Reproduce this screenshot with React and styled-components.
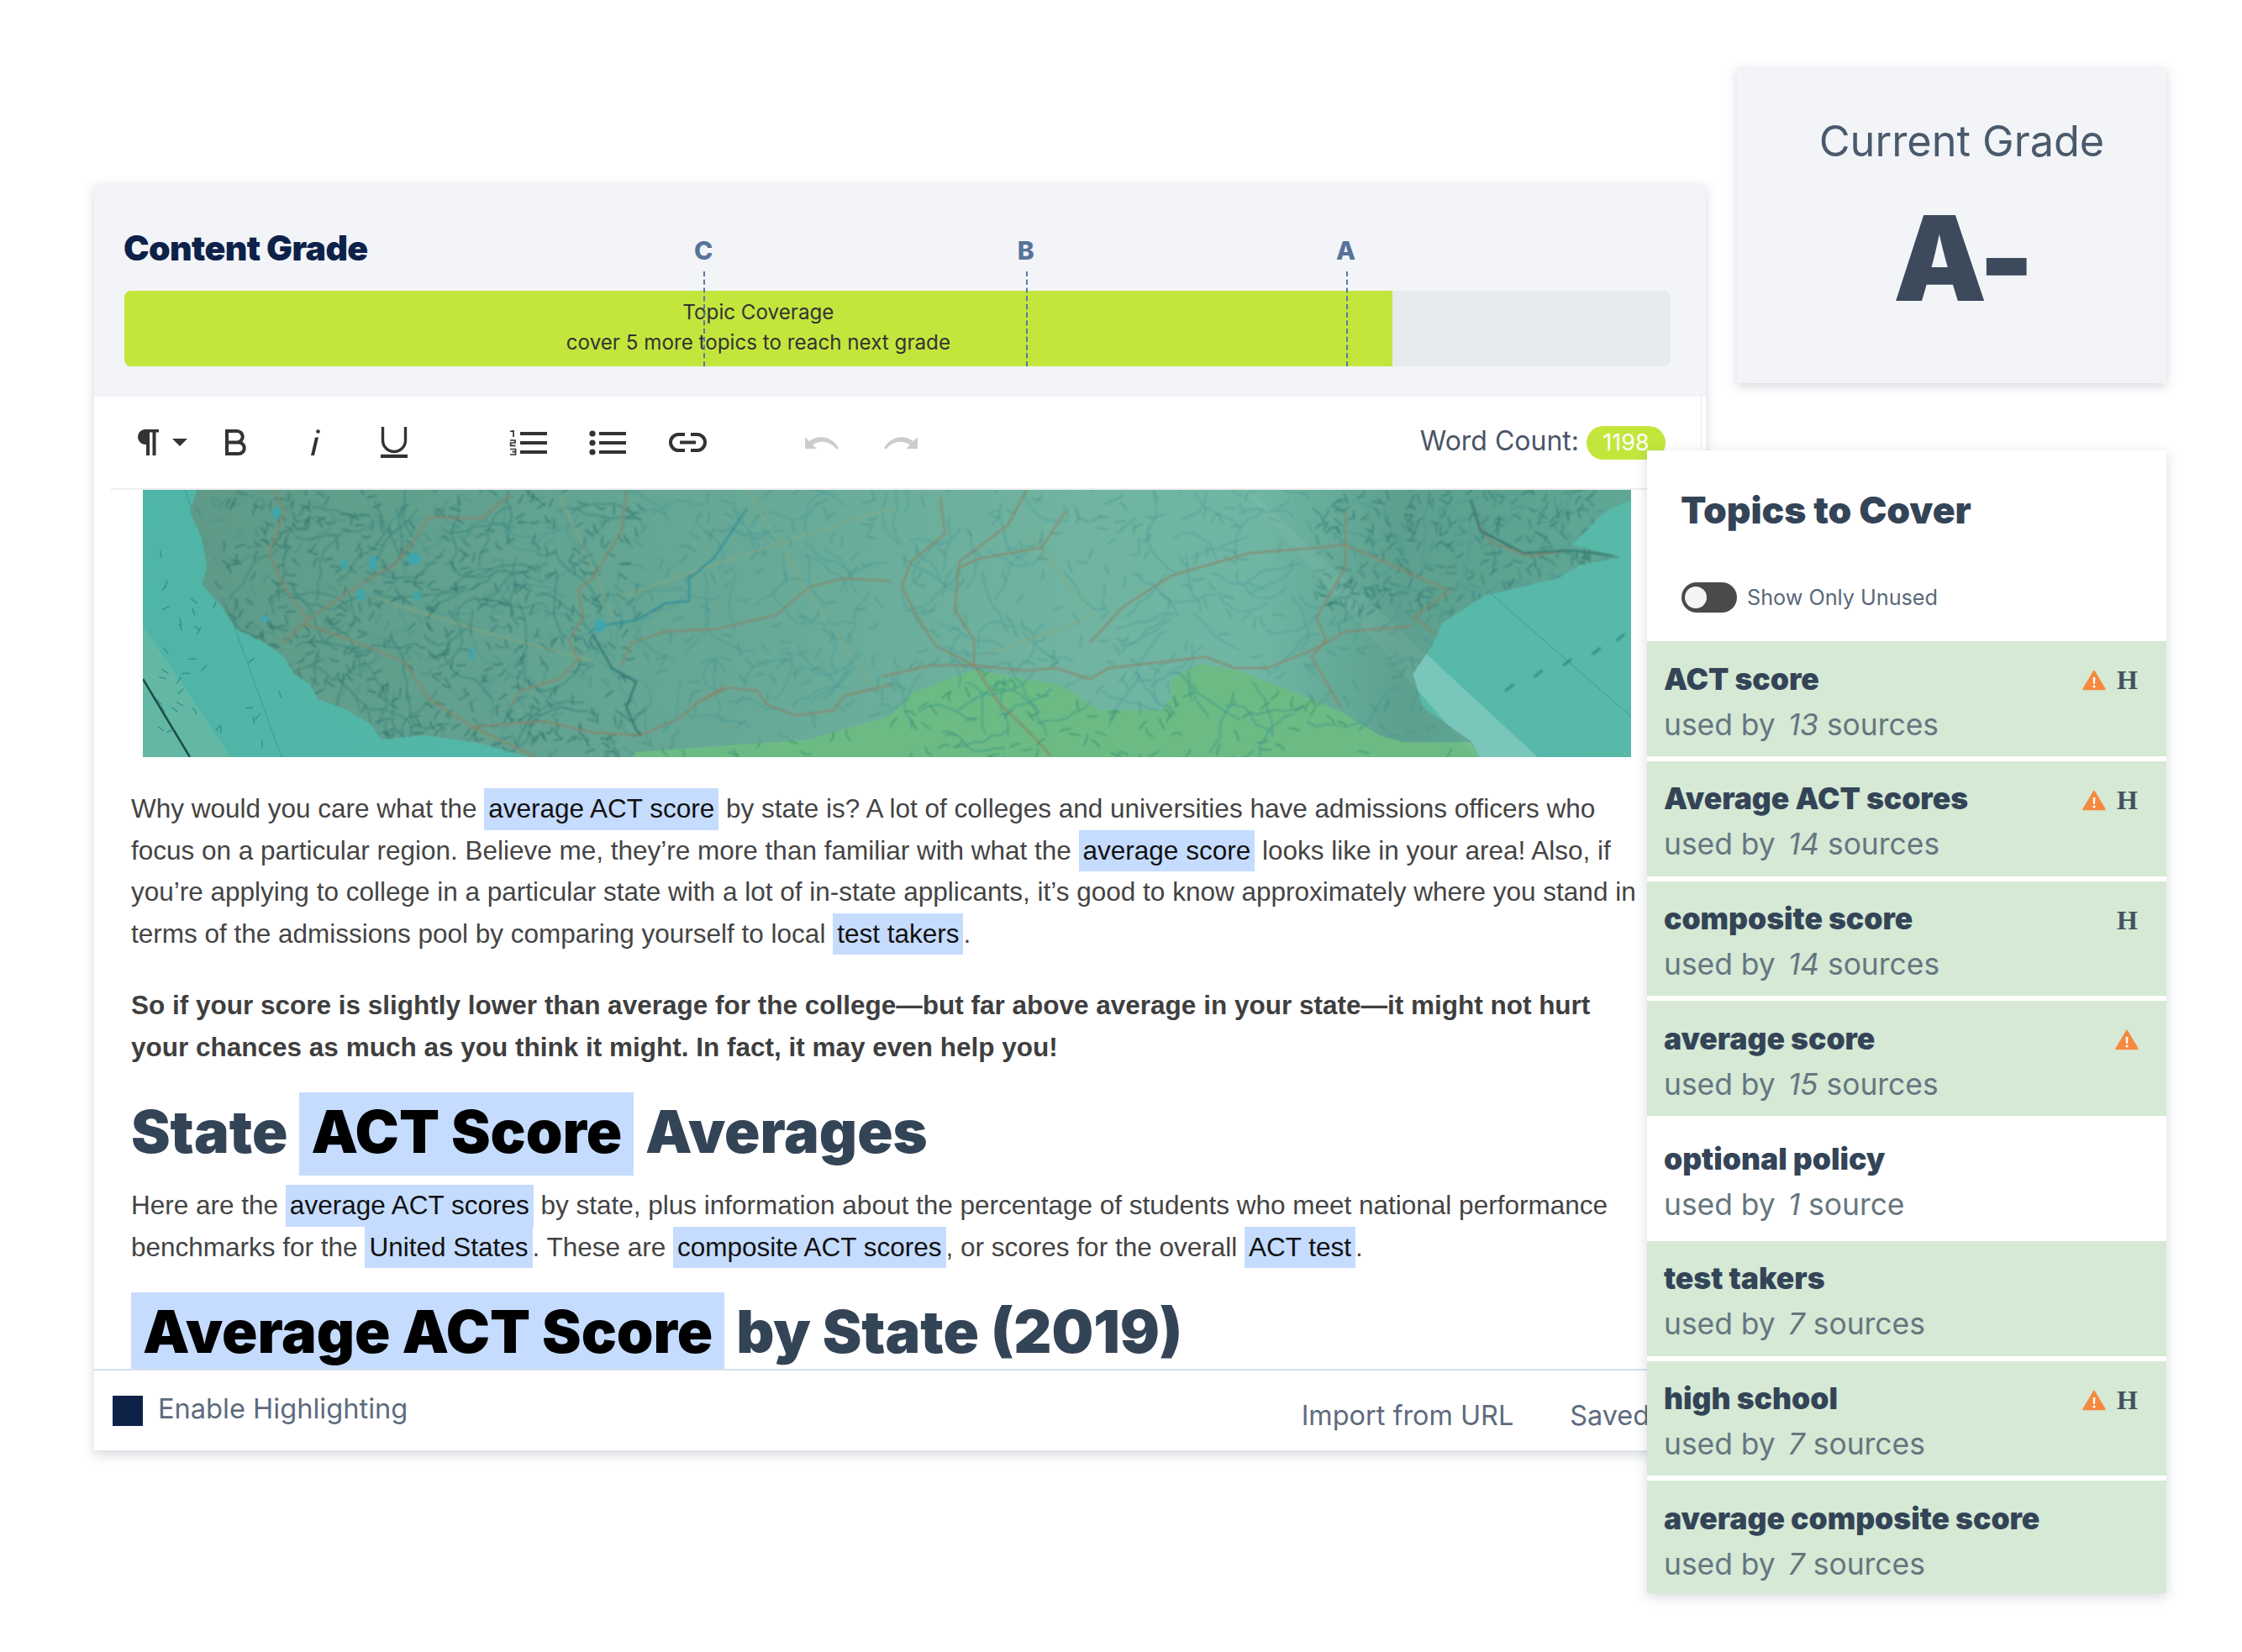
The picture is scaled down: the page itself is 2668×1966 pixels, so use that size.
import React from "react";
import styled, { createGlobalStyle } from "styled-components";

const topics = [
  { name: "ACT score", count: 13, warn: true, head: true, used: true },
  { name: "Average ACT scores", count: 14, warn: true, head: true, used: true },
  { name: "composite score", count: 14, head: true, used: true },
  { name: "average score", count: 15, warn: true, used: true },
  { name: "optional policy", count: 1 },
  { name: "test takers", count: 7, used: true },
  { name: "high school", count: 7, warn: true, head: true, used: true },
  { name: "average composite score", count: 7, used: true },
];

const grades = [
  { letter: "C", at: 37.45 },
  { letter: "B", at: 58.3 },
  { letter: "A", at: 79.0 },
];

function App() {
  return (
    <Page>
      <GlobalStyle />
      <Editor>
        <GradeHeader>
          <HeaderTitle>Content Grade</HeaderTitle>
          <Progress>
            <ProgressFill>
              <span>Topic Coverage</span>
              <span>cover 5 more topics to reach next grade</span>
            </ProgressFill>
            {grades.map((g) => (
              <Marker key={g.letter} $at={g.at}>
                <MarkerLetter>{g.letter}</MarkerLetter>
              </Marker>
            ))}
          </Progress>
        </GradeHeader>

        <Toolbar>
          <Tool $gap={0}><Pilcrow /></Tool>
          <Tool $gap={16}><Caret /></Tool>
          <Tool $gap={45}><BoldIcon /></Tool>
          <Tool $gap={76}><ItalicIcon /></Tool>
          <Tool $gap={72}><UnderlineIcon /></Tool>
          <Tool $gap={121}><OrderedIcon /></Tool>
          <Tool $gap={50}><BulletIcon /></Tool>
          <Tool $gap={51}><LinkIcon /></Tool>
          <Tool $gap={117}><UndoIcon /></Tool>
          <Tool $gap={54}><UndoIcon flip /></Tool>
          <WordCount>
            <WordLabel>Word Count:</WordLabel>
            <CountPill>1198</CountPill>
          </WordCount>
        </Toolbar>

        <Article>
          <MapPicture />
          <Para>
            Why would you care what the <Mark>average ACT score</Mark> by state is? A lot of colleges and
            universities have admissions officers who focus on a particular region. Believe me, they’re more
            than familiar with what the <Mark>average score</Mark> looks like in your area! Also, if you’re
            applying to college in a particular state with a lot of in-state applicants, it’s good to know
            approximately where you stand in terms of the admissions pool by comparing yourself to local{" "}
            <Mark>test takers</Mark>.
          </Para>
          <BoldPara>
            So if your score is slightly lower than average for the college—but far above average in your
            state—it might not hurt your chances as much as you think it might. In fact, it may even help you!
          </BoldPara>
          <Heading>
            State <HeadingMark>ACT Score</HeadingMark> Averages
          </Heading>
          <Para $flush>
            Here are the <Mark>average ACT scores</Mark> by state, plus information about the percentage of
            students who meet national performance benchmarks for the <Mark>United States</Mark>. These are{" "}
            <Mark>composite ACT scores</Mark>, or scores for the overall <Mark>ACT test</Mark>.
          </Para>
          <Heading>
            <HeadingMark>Average ACT Score</HeadingMark> by State (2019)
          </Heading>
        </Article>

        <Footer>
          <Checkbox />
          <FooterLabel>Enable Highlighting</FooterLabel>
          <FooterAction>Import from URL</FooterAction>
          <FooterAction>Saved</FooterAction>
        </Footer>
      </Editor>

      <SideColumn>
        <GradeCard>
          <GradeLabel>Current Grade</GradeLabel>
          <GradeValue>A-</GradeValue>
        </GradeCard>
        <TopicsPanel>
          <TopicsHead>
            <TopicsTitle>Topics to Cover</TopicsTitle>
            <ToggleRow>
              <Toggle />
              <ToggleLabel>Show Only Unused</ToggleLabel>
            </ToggleRow>
          </TopicsHead>
          {topics.map((t) => (
            <TopicRow key={t.name} $used={t.used}>
              <TopicText>
                <TopicName>{t.name}</TopicName>
                <TopicUse>
                  used by <em>{t.count}</em> {t.count === 1 ? "source" : "sources"}
                </TopicUse>
              </TopicText>
              <Badges>
                {t.warn && <WarnIcon />}
                {t.head && <HeadBadge>H</HeadBadge>}
              </Badges>
            </TopicRow>
          ))}
        </TopicsPanel>
      </SideColumn>
    </Page>
  );
}

export default App;

// Icons
function Pilcrow() {
  return (
    <svg width="27" height="31" viewBox="0 0 27 31" fill="#333">
      <path d="M10 0H27V3.5H23.5V31H19.5V3.5H16V31H12V18A9 9 0 0 1 10 0Z" />
    </svg>
  );
}

function Caret() {
  return (
    <svg width="18" height="9" viewBox="0 0 18 9" fill="#333">
      <path d="M0 0H18L9 9Z" />
    </svg>
  );
}

function BoldIcon() {
  return (
    <svg width="25" height="31" viewBox="0 0 25 31" fill="none" stroke="#333" strokeWidth="4">
      <path d="M2 2H14A6.7 6.7 0 0 1 14 15.5H2ZM2 15.5H16A6.7 6.7 0 0 1 16 29H2Z" />
    </svg>
  );
}

function ItalicIcon() {
  return (
    <svg width="12" height="31" viewBox="0 0 12 31" fill="#333">
      <circle cx="9.5" cy="2.5" r="2.3" />
      <path d="M6 9.5H10L5 31H1Z" />
    </svg>
  );
}

function UnderlineIcon() {
  return (
    <svg width="32" height="37" viewBox="0 0 32 37" fill="none" stroke="#333" strokeWidth="3.4">
      <path d="M2.5 0V16A13.5 13.5 0 0 0 29.5 16V0" />
      <path d="M0 35H32" strokeWidth="4.4" />
    </svg>
  );
}

function OrderedIcon() {
  return (
    <svg width="45" height="30" viewBox="0 0 45 30" fill="none" stroke="#333" strokeWidth="1.7">
      <path d="M1 1.5L5 0.8V8" />
      <path d="M1 12H7V15H1.6V18.4H7.5" />
      <path d="M1 22.5H7.5V25.6H3.5M7.5 25.6V29H1" />
      <path d="M13 4H45M13 15H45M13 26H45" strokeWidth="4.2" />
    </svg>
  );
}

function BulletIcon() {
  return (
    <svg width="44" height="30" viewBox="0 0 44 30" fill="#333">
      <circle cx="4" cy="4" r="3.6" />
      <circle cx="4" cy="15" r="3.6" />
      <circle cx="4" cy="26" r="3.6" />
      <path d="M12 2H44V6H12ZM12 13H44V17H12ZM12 24H44V28H12Z" />
    </svg>
  );
}

function LinkIcon() {
  return (
    <svg width="45" height="23" viewBox="0 0 45 23" fill="none" stroke="#333" strokeWidth="4">
      <path d="M19 2H11.5A9.5 9.5 0 0 0 11.5 21H19" />
      <path d="M26 2H33.5A9.5 9.5 0 0 1 33.5 21H26" />
      <path d="M13 11.5H32" />
    </svg>
  );
}

function UndoIcon({ flip }) {
  return (
    <svg width="40" height="16" viewBox="0 0 40 16" fill="#ccc">
      <g transform={flip ? "translate(40 0) scale(-1 1)" : undefined}>
        <path d="M0 1V15H14L9 10.5C18 4 30 6 37.5 15.5L40 14.5C32 0 16 -2 5 6Z" />
      </g>
    </svg>
  );
}

function WarnIcon() {
  return (
    <svg width="28" height="25" viewBox="0 0 28 25">
      <path d="M14 2L26.5 23H1.5Z" fill="#f5893f" stroke="#f5893f" strokeWidth="2.4" strokeLinejoin="round" />
      <path d="M12.6 9H15.4L15 17H13Z" fill="#fff" />
      <circle cx="14" cy="20" r="1.6" fill="#fff" />
    </svg>
  );
}

// Map picture: coordinates are taken from two crops of the banner and scaled into its 1771x318 box
const leftPt = ([x, y]) => [x / 1.742 - 10, y / 3 - 8];
const rightPt = ([x, y]) => [880 + x / 1.742, y / 3 - 8];
const toPath = (pts) =>
  pts.map((p, i) => `${i ? "L" : "M"}${p[0].toFixed(1)} ${p[1].toFixed(1)}`).join("");

const westCoast = [
  [130, 22], [115, 100], [140, 200], [150, 300], [140, 360], [180, 440], [210, 520], [270, 570],
  [310, 620], [330, 680], [365, 720], [380, 770], [440, 810], [490, 860], [510, 915], [600, 900],
  [720, 930], [830, 985],
].map(leftPt);

const mexicoLeft = [[1030, 985], [1040, 960], [1200, 940], [1400, 915], [1568, 830]].map(leftPt);
const mexicoRight = [
  [60, 750], [190, 665], [300, 700], [370, 720], [450, 810], [580, 810], [600, 760], [600, 700],
  [660, 645], [740, 670], [830, 730], [950, 815], [1030, 900], [1080, 925], [1220, 925], [1240, 985],
].map(rightPt);

const gulfCoast = [
  [1240, 985], [1220, 920], [1120, 800], [1100, 680], [1140, 580], [1160, 500], [1250, 400], [1400, 340],
  [1450, 290], [1530, 265], [1430, 220], [1500, 100], [1552, 60], [1552, 22],
].map(rightPt);

const landPath = `${toPath(westCoast)}${toPath(gulfCoast).replace("M", "L")}Z`;
const greenPath = `${toPath(mexicoLeft)}${toPath(mexicoRight).replace("M", "L")}Z`;

const roadsLeft = [
  [[610, 120], [660, 125], [720, 125], [780, 40]],
  [[610, 120], [590, 180], [540, 290], [470, 360], [400, 440], [350, 500], [310, 570]],
  [[290, 22], [310, 100], [280, 250], [310, 370], [360, 490]],
  [[350, 500], [450, 560], [560, 640], [610, 770], [700, 870], [830, 975]],
  [[1020, 30], [1010, 170], [950, 340], [920, 380], [930, 480], [900, 560], [920, 630], [880, 700], [800, 740], [780, 800]],
  [[1010, 650], [1030, 570], [1100, 530], [1210, 520], [1330, 470], [1400, 370], [1470, 340], [1568, 350]],
  [[1160, 790], [1230, 730], [1290, 740], [1310, 790], [1370, 830], [1450, 810], [1470, 760], [1568, 720]],
  [[1050, 900], [1130, 840], [1170, 780], [1220, 730]],
  [[700, 870], [850, 850], [950, 890], [1050, 900]],
].map((r) => toPath(r.map(leftPt)));

const roadsRight = [
  [[120, 50], [130, 180], [60, 280], [40, 370], [70, 470], [110, 580], [190, 650]],
  [[300, 22], [260, 150], [160, 280], [150, 450], [190, 560], [190, 650]],
  [[380, 100], [330, 230], [200, 270], [160, 300]],
  [[0, 690], [100, 650], [190, 650], [300, 670], [360, 660], [430, 700], [470, 660], [620, 630], [670, 620], [730, 660], [800, 660], [900, 590], [960, 530], [1100, 510]],
  [[430, 570], [500, 440], [600, 330], [760, 250], [900, 230], [960, 220], [1170, 380]],
  [[190, 650], [240, 780], [310, 900], [350, 975]],
  [[960, 100], [960, 300], [900, 480], [920, 560], [890, 620], [950, 800]],
  [[1230, 130], [1260, 210], [1340, 260], [1420, 240]],
  [[1180, 380], [1100, 480], [1150, 540]],
  [[1220, 60], [1240, 170], [1330, 250]],
].map((r) => toPath(r.map(rightPt)));

const riverPaths = [
  toPath([[950, 540], [990, 660], [1040, 710], [1020, 800], [1040, 880], [1050, 900]].map(leftPt)),
  toPath([[1430, 240], [1530, 262]].map(rightPt)),
  toPath([[1220, 60], [1240, 170], [1330, 250], [1430, 240]].map(rightPt)),
];

const blueMain = toPath(
  [[1270, 90], [1200, 270], [1150, 340], [1150, 420], [1100, 430], [1040, 490], [960, 510], [940, 540]].map(leftPt)
);

const lakes = [
  [495, 285, 5, 9], [580, 270, 8, 7], [470, 400, 5, 7], [435, 290, 4, 6], [295, 105, 5, 7],
  [965, 510, 6, 8], [585, 400, 4, 6], [700, 610, 3, 8], [270, 485, 5, 4],
].map(([x, y, rx, ry]) => {
  const [cx, cy] = leftPt([x, y]);
  return { cx, cy, rx, ry };
});

const gridPaths = [
  toPath([[880, 40], [960, 340], [990, 470]].map(leftPt)),
  toPath([[500, 410], [700, 520], [960, 640]].map(leftPt)),
  toPath([[1000, 410], [1200, 290], [1568, 90]].map(leftPt)),
  toPath([[1270, 22], [1400, 400], [1530, 730]].map(leftPt)),
  toPath([[200, 620], [430, 480]].map(rightPt)),
  toPath([[300, 170], [440, 480]].map(rightPt)),
];

const seaMarks = [[1300, 730], [1360, 680], [1420, 640], [1480, 600], [1530, 550]].map(rightPt);

function seeded(seed) {
  let s = seed;
  return () => {
    s = (s + 0x6d2b79f5) | 0;
    let t = Math.imul(s ^ (s >>> 15), 1 | s);
    t = (t + Math.imul(t ^ (t >>> 7), 61 | t)) ^ t;
    return ((t ^ (t >>> 14)) >>> 0) / 4294967296;
  };
}

function wiggles(seed, count, box, steps, stepSize) {
  const rnd = seeded(seed);
  let d = "";
  for (let i = 0; i < count; i++) {
    let x = box[0] + rnd() * box[2];
    let y = box[1] + rnd() * box[3];
    let dir = rnd() * 6.28;
    d += `M${x.toFixed(1)} ${y.toFixed(1)}`;
    for (let j = 0; j < steps; j++) {
      dir += (rnd() - 0.5) * 1.4;
      x += Math.cos(dir) * stepSize;
      y += Math.sin(dir) * stepSize;
      d += `L${x.toFixed(1)} ${y.toFixed(1)}`;
    }
  }
  return d;
}

const denseTicks = wiggles(11, 520, [90, 0, 500, 318], 2, 6);
const eastTicks = wiggles(61, 260, [1390, 0, 340, 150], 2, 6);
const wideTicks = wiggles(23, 800, [60, 0, 1700, 318], 2, 7);
const blueRivers = wiggles(37, 200, [300, 0, 1400, 318], 6, 12);
const westRivers = wiggles(41, 70, [90, 0, 420, 318], 8, 11);
const seaLabels = wiggles(53, 45, [12, 60, 150, 240], 1, 9);

function MapPicture() {
  return (
    <MapBanner viewBox="0 0 1771 318">
      <defs>
        <linearGradient id="landTone" x1="0" x2="1" y1="0" y2="0">
          <stop offset="0" stopColor="#5f9a88" />
          <stop offset="0.3" stopColor="#64a593" />
          <stop offset="0.62" stopColor="#70b4a1" />
          <stop offset="0.74" stopColor="#70b6a4" />
          <stop offset="0.84" stopColor="#5da08f" />
          <stop offset="1" stopColor="#5fa795" />
        </linearGradient>
        <linearGradient id="seaTone" x1="0" x2="1" y1="0" y2="0">
          <stop offset="0" stopColor="#4fb5a6" />
          <stop offset="0.2" stopColor="#53b7a8" />
          <stop offset="1" stopColor="#58b9a9" />
        </linearGradient>
        <clipPath id="landClip">
          <path d={landPath} />
        </clipPath>
        <clipPath id="greenClip">
          <path d={greenPath} />
        </clipPath>
        <filter id="soft" x="0" y="0" width="1" height="1">
          <feGaussianBlur stdDeviation="0.85" />
        </filter>
      </defs>
      <rect width="1771" height="318" fill="url(#seaTone)" />
      <path d="M0 162L105 318H0Z" fill="#62b8a4" />
      <path d="M0 225L56 318" stroke="#1d4c48" strokeWidth="2.5" />
      <path d="M50 0L165 318M1600 120L1771 270" stroke="#3d9d92" strokeWidth="1" />
      <path d="M1310 0H1316L1660 318H1586Z" fill="#ffffff" opacity="0.2" />
      <path d={seaLabels} fill="none" stroke="#2f7f80" strokeWidth="1.4" opacity="0.7" />
      <path d={landPath} fill="url(#landTone)" />
      <path d={greenPath} fill="#6cbb85" />
      <path d="M1310 0H1316L1660 318H1586Z" fill="#ffffff" opacity="0.05" clipPath="url(#landClip)" />
      <g filter="url(#soft)" fill="none">
        <g clipPath="url(#landClip)">
          <path d={wideTicks} stroke="#2f7a70" strokeWidth="1.2" opacity="0.45" />
          <path d={denseTicks} stroke="#22635c" strokeWidth="1.3" opacity="0.7" />
          <path d={eastTicks} stroke="#22635c" strokeWidth="1.3" opacity="0.6" />
          <path d={blueRivers} stroke="#378f98" strokeWidth="1.2" opacity="0.55" />
          <path d={westRivers} stroke="#2c7a74" strokeWidth="1.3" opacity="0.7" />
          {gridPaths.map((d) => (
            <path key={d} d={d} stroke="#8fa87a" strokeWidth="1.4" opacity="0.75" />
          ))}
          {roadsLeft.concat(roadsRight).map((d) => (
            <path key={d} d={d} stroke="#8c8468" strokeWidth="2" opacity="0.9" />
          ))}
          {riverPaths.map((d) => (
            <path key={d} d={d} stroke="#2f736e" strokeWidth="2" />
          ))}
          <path d={blueMain} stroke="#2f8f98" strokeWidth="2" />
          {lakes.map((l) => (
            <ellipse key={l.cx} cx={l.cx} cy={l.cy} rx={l.rx} ry={l.ry} fill="#3ea6ae" />
          ))}
        </g>
        <g clipPath="url(#greenClip)">
          <path d={wideTicks} stroke="#3a8f6f" strokeWidth="1.2" opacity="0.8" />
          <path d={blueRivers} stroke="#3d9a88" strokeWidth="1.2" opacity="0.7" />
        </g>
        {seaMarks.map(([x, y]) => (
          <path key={x} d={`M${x - 5} ${y + 4}L${x + 5} ${y - 4}`} stroke="#2f8f8a" strokeWidth="3" />
        ))}
      </g>
    </MapBanner>
  );
}

// Components
const GlobalStyle = createGlobalStyle`
  html, body {
    margin: 0;
    padding: 0;
    background: #ffffff;
  }
  body {
    font-family: Inter, "Noto Sans", sans-serif;
    width: 2668px;
    height: 1966px;
    overflow: hidden;
  }
`;

const Page = styled.div`
  display: flex;
  align-items: flex-start;
  padding-left: 112px;
`;

const Editor = styled.div`
  width: 1918px;
  margin-top: 218px;
  flex-shrink: 0;
  background: #ffffff;
  border-radius: 6px 6px 0 0;
  box-shadow: 0 5px 14px rgba(70, 80, 100, 0.22);
`;

const GradeHeader = styled.div`
  height: 254px;
  box-sizing: border-box;
  padding: 128px 42px 0 36px;
  background: #f2f4f8;
  border-radius: 6px 6px 0 0;
  position: relative;
`;

const HeaderTitle = styled.h2`
  position: absolute;
  left: 35px;
  top: 50px;
  margin: 0;
  font-size: 41px;
  line-height: 54px;
  font-weight: 900;
  letter-spacing: -0.6px;
  color: #0d2149;
`;

const Progress = styled.div`
  position: relative;
  height: 90px;
  background: #e8ebee;
  border-radius: 8px;
`;

const ProgressFill = styled.div`
  width: 82%;
  height: 100%;
  box-sizing: border-box;
  padding-bottom: 3px;
  display: flex;
  flex-direction: column;
  align-items: center;
  justify-content: center;
  background: #c3e63d;
  border-radius: 8px 0 0 8px;
  font-size: 24.2px;
  line-height: 36px;
  color: #333333;
`;

const Marker = styled.div`
  position: absolute;
  left: ${(props) => props.$at}%;
  top: -23px;
  bottom: 0;
  border-left: 2px dashed #5a78a8;
`;

const MarkerLetter = styled.span`
  position: absolute;
  left: -2px;
  top: -43px;
  transform: translateX(-50%);
  font-size: 30px;
  line-height: 36px;
  font-weight: 800;
  color: #567399;
`;

const Toolbar = styled.div`
  height: 109px;
  box-sizing: border-box;
  display: flex;
  align-items: center;
  padding: 0 42px 0 50px;
  border-right: 1px solid #e8eaee;
  margin-right: 5px;
`;

const Tool = styled.span`
  display: flex;
  margin-left: ${(props) => props.$gap}px;

  svg {
    display: block;
  }
`;

const WordCount = styled.div`
  margin-left: auto;
  display: flex;
  align-items: center;
  gap: 9px;
`;

const WordLabel = styled.span`
  margin-bottom: 5px;
  font-size: 32px;
  color: #4a5568;
`;

const CountPill = styled.span`
  width: 94px;
  height: 40px;
  display: flex;
  align-items: center;
  justify-content: center;
  border-radius: 20px;
  background: #c3e63d;
  color: #ffffff;
  font-size: 27px;
`;

const Article = styled.div`
  height: 1048px;
  box-sizing: border-box;
  overflow: hidden;
  padding-left: 24px;
  border-top: 2px solid #eeeeee;
  margin-left: 20px;
`;

const MapBanner = styled.svg`
  display: block;
  width: 1771px;
  height: 318px;
  margin-left: 14px;
`;

const Para = styled.p`
  width: 1800px;
  margin: ${(props) => (props.$flush ? "0" : "37px 0 0")};
  font-family: "Liberation Sans", Arial, sans-serif;
  font-size: 31.5px;
  line-height: 49.5px;
  color: #444444;
`;

const BoldPara = styled(Para)`
  width: 1770px;
  margin-top: 36px;
  font-weight: 700;
  color: #3f3f3f;
`;

const Mark = styled.span`
  display: inline-block;
  padding: 0 5px;
  background: #c5dcff;
  color: #111111;
`;

const Heading = styled.h2`
  margin: 29px 0 11px;
  font-family: Inter, sans-serif;
  font-size: 70px;
  line-height: 94px;
  font-weight: 900;
  color: #344457;
  white-space: nowrap;
`;

const HeadingMark = styled.span`
  display: inline-block;
  padding: 0 14px 5px;
  background: #c5dcff;
  color: #000000;
`;

const Footer = styled.div`
  height: 97px;
  box-sizing: border-box;
  display: flex;
  align-items: center;
  padding: 0 67px 0 22px;
  border-top: 2px solid #d5e0ef;
`;

const Checkbox = styled.span`
  width: 36px;
  height: 36px;
  background: #0d2149;
`;

const FooterLabel = styled.span`
  margin-left: 18px;
  margin-bottom: 5px;
  font-size: 32.6px;
  color: #5d6b7e;
`;

const FooterAction = styled.span`
  font-size: 32.4px;
  color: #5d6b7e;
  padding-top: 12px;
  margin-left: 67px;

  &:nth-of-type(3) {
    margin-left: auto;
  }
`;

const SideColumn = styled.div`
  position: relative;
  z-index: 1;
  width: 618px;
  margin-left: -70px;
  flex-shrink: 0;
  display: flex;
  flex-direction: column;
  align-items: flex-end;
`;

const GradeCard = styled.div`
  width: 511px;
  height: 376px;
  margin-top: 80px;
  box-sizing: border-box;
  padding: 60px 0 0 24px;
  display: flex;
  flex-direction: column;
  align-items: center;
  background: #f2f4f8;
  box-shadow: 0 4px 12px rgba(70, 80, 100, 0.22);
`;

const GradeLabel = styled.div`
  font-size: 50.4px;
  line-height: 56px;
  color: #4a5a6c;
`;

const GradeValue = styled.div`
  margin-top: 36px;
  font-size: 140px;
  line-height: 150px;
  font-weight: 900;
  letter-spacing: -5px;
  color: #3c4a5c;
`;

const TopicsPanel = styled.div`
  width: 618px;
  height: 1360px;
  margin-top: 80px;
  background: #ffffff;
  box-shadow: 0 4px 14px rgba(70, 80, 100, 0.22);
`;

const TopicsHead = styled.div`
  height: 227px;
  box-sizing: border-box;
  padding: 44px 0 0 40px;
`;

const TopicsTitle = styled.h3`
  margin: 0;
  font-size: 44.4px;
  line-height: 54px;
  font-weight: 900;
  color: #344457;
`;

const ToggleRow = styled.div`
  margin-top: 59px;
  margin-left: 1px;
  display: flex;
  align-items: center;
  gap: 12px;
`;

const Toggle = styled.span`
  width: 66px;
  height: 36px;
  box-sizing: border-box;
  padding: 5px 4px;
  border-radius: 18px;
  background: #4a4a4a;

  &::before {
    content: "";
    display: block;
    width: 26px;
    height: 26px;
    border-radius: 50%;
    background: #f4f4f4;
  }
`;

const ToggleLabel = styled.span`
  font-size: 25.2px;
  color: #5a6878;
`;

const TopicRow = styled.div`
  height: 142.75px;
  box-sizing: border-box;
  display: flex;
  justify-content: space-between;
  padding: 22.5px 33px 0 20px;
  background: ${(props) => (props.$used ? "#d5e9d5" : "#ffffff")};
  border-bottom: 6px solid #ffffff;

  &:last-child {
    height: 134px;
    border-bottom: 0;
  }
`;

const TopicText = styled.div`
  display: flex;
  flex-direction: column;
  gap: 9px;
`;

const TopicName = styled.div`
  font-size: 35.5px;
  line-height: 46px;
  font-weight: 900;
  color: #344457;
`;

const TopicUse = styled.div`
  font-size: 35.4px;
  line-height: 44px;
  color: #66767f;

  em {
    margin-left: 5px;
  }
`;

const Badges = styled.div`
  height: 46px;
  margin-top: 1px;
  display: flex;
  align-items: center;
  gap: 13px;
`;

const HeadBadge = styled.span`
  width: 26px;
  font-family: "Liberation Serif", serif;
  font-weight: 700;
  font-size: 32px;
  color: #44525e;
`;
